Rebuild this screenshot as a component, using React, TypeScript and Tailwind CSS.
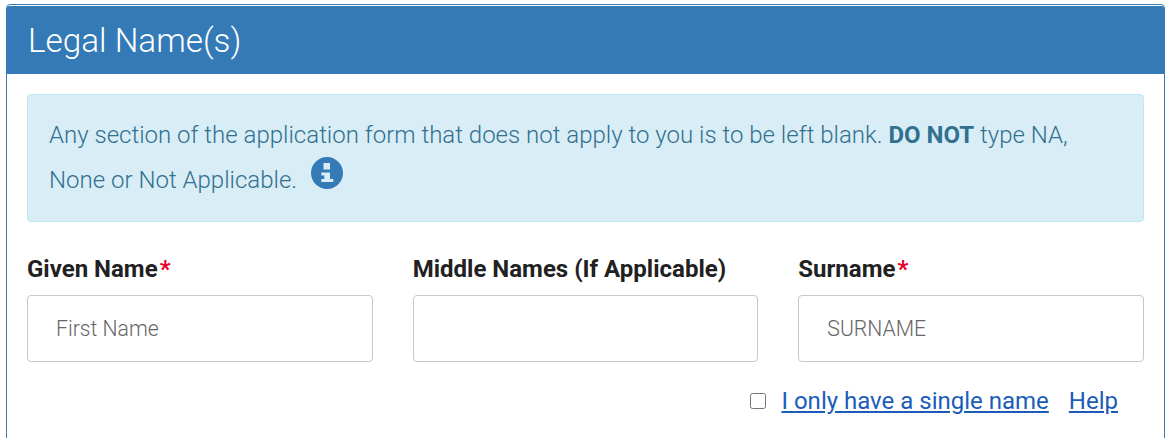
const fields = [
  { label: 'Given Name', required: true, placeholder: 'First Name' },
  { label: 'Middle Names (If Applicable)', required: false, placeholder: '' },
  { label: 'Surname', required: true, placeholder: 'SURNAME' },
]

function InfoIcon() {
  return (
    <svg viewBox="0 0 32 32" className="ml-[14px] inline-block h-[32px] w-[32px] -translate-y-[9px] align-middle">
      <path
        fill="#337ab7"
        fillRule="evenodd"
        d="M16 0a16 16 0 1 1 0 32a16 16 0 1 1 0-32ZM12.5 6v6.5H19V6ZM10.3 15.5v3h3V22h-3v3h12v-3h-3.3v-6.5Z"
      />
    </svg>
  )
}

export default function App() {
  return (
    <div className="h-[438px] overflow-hidden bg-white pt-1 px-[6px] font-['Roboto',sans-serif]">
      <div className="h-[500px] rounded-t-[4px] border border-[#337ab7] pt-px">
        {/* Panel heading */}
        <div className="flex h-[68px] items-center rounded-t-[2px] bg-[#337ab7] pl-[21px] pt-[2px]">
          <h1 className="text-[33.3px] font-light leading-none text-white">Legal Name(s)</h1>
        </div>

        <div className="px-5 pt-5">
          {/* Notice */}
          <div className="h-[128px] rounded-[4px] border border-[#bce8f1] bg-[#d9edf7] px-[21px] pt-[18px] text-[24.02px] font-light leading-[45px] text-[#31708f]">
            Any section of the application form that does not apply to you is to be left blank.{' '}
            <strong className="font-bold">DO NOT</strong> type NA, None or Not Applicable.
            <InfoIcon />
          </div>

          {/* Name fields */}
          <div className="mt-[30px] grid grid-cols-3 gap-10">
            {fields.map((field) => (
              <div key={field.label}>
                <label className="block text-[24px] font-bold leading-[34px] text-[#212121]">
                  {field.label}
                  {field.required && <span className="ml-[2px] text-[#e4002b]">*</span>}
                </label>
                <input
                  type="text"
                  placeholder={field.placeholder}
                  className="mt-[9px] h-[67px] w-full rounded-[4px] border border-[#c8c8c8] bg-white px-7 text-[21.2px] font-light placeholder:text-[#666666]"
                />
              </div>
            ))}
          </div>

          {/* Single name option */}
          <div className="mt-[21px] flex items-center justify-end gap-5 pr-[26px] text-[24px] font-normal leading-[36px] text-[#1b5cb8]">
            <label className="flex items-center gap-[15px]">
              <input type="checkbox" className="h-4 w-4" />
              <a href="#" className="underline">I only have a single name</a>
            </label>
            <a href="#" className="underline">Help</a>
          </div>
        </div>
      </div>
    </div>
  )
}
